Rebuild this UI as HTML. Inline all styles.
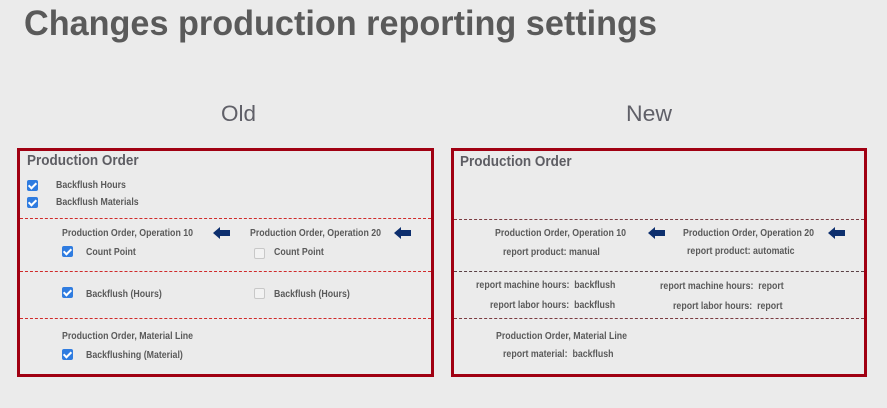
<!DOCTYPE html>
<html><head><meta charset="utf-8"><style>
body{margin:0;width:887px;height:408px;background:#ebebeb;font-family:"Liberation Sans",sans-serif;position:relative;overflow:hidden}
.a{position:absolute;white-space:nowrap;color:#5a5a5a;font-weight:bold;font-size:10px;line-height:12px;transform:scaleX(0.88);transform-origin:0 0}
.box{position:absolute;border:3px solid #a00012;box-sizing:border-box}
.h{position:absolute;font-weight:bold;font-size:14.5px;color:#5d5d63;line-height:16px;transform:scaleX(0.93);transform-origin:0 0}
.d{position:absolute;height:0;border-top:1px dashed #d02a2a}
.cb{position:absolute;width:11px;height:11px;border-radius:2px;background:#2f7ce0}
.cb:after{content:"";position:absolute;left:3px;top:1px;width:3px;height:6px;border:solid #fff;border-width:0 2px 2px 0;transform:rotate(45deg)}
.ub{position:absolute;width:9px;height:9px;border:1px solid #c8c8c8;border-radius:2px;background:#f2f2f2}
.ar{position:absolute;width:17px;height:12px}
</style></head><body>
<svg style="position:absolute;left:0;top:0" width="887" height="130">
<text x="24" y="35" textLength="633" lengthAdjust="spacingAndGlyphs" font-family="Liberation Sans" font-weight="bold" font-size="35" fill="#5a5a5a">Changes production reporting settings</text>
<text x="221" y="121" textLength="35" lengthAdjust="spacingAndGlyphs" font-family="Liberation Sans" font-size="22" fill="#606068">Old</text>
<text x="626" y="121" textLength="46" lengthAdjust="spacingAndGlyphs" font-family="Liberation Sans" font-size="22" fill="#606068">New</text>
</svg>

<div class="box" style="left:17px;top:148px;width:417px;height:229px"></div>
<div class="box" style="left:451px;top:148px;width:416px;height:229px"></div>

<!-- left -->
<div class="h" style="left:27px;top:153px">Production Order</div>
<div class="cb" style="left:27px;top:180px"></div><div class="a" style="left:56px;top:180px">Backflush Hours</div>
<div class="cb" style="left:27px;top:197px"></div><div class="a" style="left:56px;top:197px">Backflush Materials</div>
<div class="d" style="left:20px;width:411px;top:218px"></div>
<div class="a" style="left:62px;top:228px">Production Order, Operation 10</div>
<svg class="ar" style="left:213px;top:227px" viewBox="0 0 17 12"><path d="M0 6 L7 0 V3 H17 V9 H7 V12 Z" fill="#0d2f6e"/></svg>
<div class="a" style="left:250px;top:228px">Production Order, Operation 20</div>
<svg class="ar" style="left:394px;top:227px" viewBox="0 0 17 12"><path d="M0 6 L7 0 V3 H17 V9 H7 V12 Z" fill="#0d2f6e"/></svg>
<div class="cb" style="left:62px;top:246px"></div><div class="a" style="left:86px;top:247px">Count Point</div>
<div class="ub" style="left:254px;top:248px"></div><div class="a" style="left:274px;top:247px">Count Point</div>
<div class="d" style="left:20px;width:411px;top:271px"></div>
<div class="cb" style="left:62px;top:287px"></div><div class="a" style="left:86px;top:289px">Backflush (Hours)</div>
<div class="ub" style="left:254px;top:288px"></div><div class="a" style="left:274px;top:289px">Backflush (Hours)</div>
<div class="d" style="left:20px;width:411px;top:318px"></div>
<div class="a" style="left:62px;top:331px">Production Order, Material Line</div>
<div class="cb" style="left:62px;top:349px"></div><div class="a" style="left:86px;top:350px">Backflushing (Material)</div>

<!-- right -->
<div class="h" style="left:460px;top:154px">Production Order</div>
<div class="d" style="left:454px;width:410px;top:219px;border-top-color:#7a3a40"></div>
<div class="a" style="left:495px;top:228px">Production Order, Operation 10</div>
<svg class="ar" style="left:648px;top:227px" viewBox="0 0 17 12"><path d="M0 6 L7 0 V3 H17 V9 H7 V12 Z" fill="#0d2f6e"/></svg>
<div class="a" style="left:683px;top:228px">Production Order, Operation 20</div>
<svg class="ar" style="left:828px;top:227px" viewBox="0 0 17 12"><path d="M0 6 L7 0 V3 H17 V9 H7 V12 Z" fill="#0d2f6e"/></svg>
<div class="a" style="left:503px;top:247px">report product: manual</div>
<div class="a" style="left:687px;top:246px">report product: automatic</div>
<div class="d" style="left:454px;width:410px;top:271px;border-top-color:#5a4045"></div>
<div class="a" style="left:476px;top:280px">report machine hours:&nbsp; backflush</div>
<div class="a" style="left:660px;top:281px">report machine hours:&nbsp; report</div>
<div class="a" style="left:490px;top:300px">report labor hours:&nbsp; backflush</div>
<div class="a" style="left:673px;top:301px">report labor hours:&nbsp; report</div>
<div class="d" style="left:454px;width:410px;top:318px;border-top-color:#7a3a40"></div>
<div class="a" style="left:496px;top:331px">Production Order, Material Line</div>
<div class="a" style="left:503px;top:349px">report material:&nbsp; backflush</div>
</body></html>
